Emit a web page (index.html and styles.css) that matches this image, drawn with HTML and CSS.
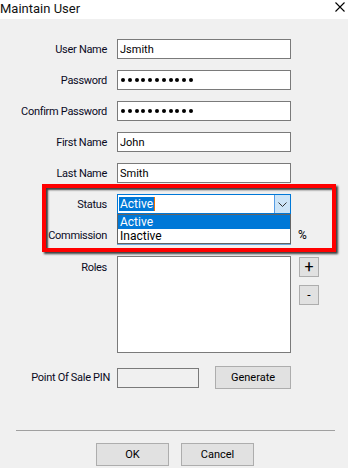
FILE: index.html
```html
<!DOCTYPE html>
<html lang="en">
<head>
    <meta charset="UTF-8">
    <meta name="viewport" content="width=device-width, initial-scale=1.0">
    <title>Maintain User</title>
    <link rel="stylesheet" href="styles.css">
</head>
<body>
    <div class="titlebar">
        <span class="title">Maintain User</span>
        <svg class="close" width="10" height="10" viewBox="0 0 10 10">
            <path d="M0.5 0.5 L9.5 9.5 M9.5 0.5 L0.5 9.5" stroke="#000" stroke-width="1.1" fill="none"/>
        </svg>
    </div>
    <div class="dialog">
        <div class="form">
            <label class="form-label">User Name</label>
            <input class="field" type="text" value="Jsmith">
            <span></span>

            <label class="form-label">Password</label>
            <div class="field dots"><span></span><span></span><span></span><span></span><span></span><span></span><span></span><span></span><span></span><span></span><span></span></div>
            <span></span>

            <label class="form-label">Confirm Password</label>
            <div class="field dots"><span></span><span></span><span></span><span></span><span></span><span></span><span></span><span></span><span></span><span></span><span></span></div>
            <span></span>

            <label class="form-label">First Name</label>
            <input class="field" type="text" value="John">
            <span></span>

            <label class="form-label">Last Name</label>
            <input class="field" type="text" value="Smith">
            <span></span>

            <label class="form-label">Status</label>
            <div class="combo">
                <span class="combo-text"><span class="selected">Active</span></span>
                <span class="combo-button">
                    <svg width="9" height="5" viewBox="0 0 9 5">
                        <path d="M0.5 0.5 L4.5 4.5 L8.5 0.5" stroke="#333" stroke-width="1" fill="none"/>
                    </svg>
                </span>
                <div class="combo-list">
                    <div class="combo-item active">Active</div>
                    <div class="combo-item">Inactive</div>
                </div>
            </div>
            <span></span>

            <label class="form-label">Commission</label>
            <input class="field commission" type="text" value="">
            <span class="unit">%</span>

            <label class="form-label top">Roles</label>
            <div class="listbox"></div>
            <div class="list-buttons">
                <button class="small-button plus">+</button>
                <button class="small-button">-</button>
            </div>

            <label class="form-label pin-label">Point Of Sale PIN</label>
            <div class="pin-row">
                <input class="field pin" type="text" value="" disabled>
                <button class="button">Generate</button>
            </div>
            <span></span>

            <div class="highlight"></div>
        </div>
        <div class="separator"></div>
        <div class="actions">
            <button class="button">OK</button>
            <button class="button">Cancel</button>
        </div>
    </div>
</body>
</html>
```

FILE: styles.css
```css
body {
    margin: 0;
    padding: 0;
    background-color: #f0f0f0;
    font-family: Roboto, 'Liberation Sans', sans-serif;
    font-size: 11px;
    color: #000;
}

.titlebar {
    height: 19px;
    background-color: #fff;
    display: flex;
    align-items: center;
    justify-content: space-between;
}

.title {
    font-size: 13px;
    color: #111;
    margin-top: -3px;
}

.close {
    margin-right: 3px;
    margin-top: -5px;
}

.dialog {
    padding-top: 20px;
}

.form {
    position: relative;
    display: grid;
    grid-template-columns: 97px 174px auto;
    column-gap: 10px;
    row-gap: 11px;
    padding-left: 10px;
    align-items: center;
}

.form-label {
    text-align: right;
    color: #0a0a1e;
    letter-spacing: -0.3px;
    white-space: nowrap;
}

.form-label.top {
    align-self: start;
    padding-top: 5px;
}

.field {
    box-sizing: border-box;
    width: 174px;
    height: 20px;
    margin: 0;
    padding: 0 2px;
    border: 1px solid #7a7a7a;
    background-color: #fff;
    font-family: Roboto, 'Liberation Sans', sans-serif;
    font-size: 11px;
    color: #000;
    outline: none;
}

.dots {
    display: flex;
    align-items: center;
    gap: 2.8px;
    padding-left: 3px;
}

.dots span {
    width: 4px;
    height: 4px;
    border-radius: 50%;
    background-color: #000;
}

.combo {
    position: relative;
    box-sizing: border-box;
    height: 20px;
    border: 1px solid #0078d7;
    background-color: #fff;
    display: flex;
    font-size: 12px;
}

.combo-text {
    flex: 1;
    display: flex;
    align-items: center;
    padding-left: 1px;
}

.selected {
    background-color: #0078d7;
    color: #fff;
    padding: 0 1px;
    line-height: 14px;
    border-right: 1px solid #f07000;
}

.combo-button {
    width: 15px;
    background-color: #cce4f7;
    border-left: 1px solid #569de5;
    display: flex;
    align-items: center;
    justify-content: center;
}

.combo-list {
    position: absolute;
    top: 19px;
    left: -1px;
    right: -1px;
    box-sizing: border-box;
    border: 1px solid #646464;
    background-color: #fff;
    z-index: 2;
}

.combo-item {
    height: 14px;
    line-height: 14px;
    padding-left: 2px;
}

.combo-item.active {
    background-color: #0078d7;
    color: #fff;
}

.commission {
    border-color: #6fa8dc;
}

.unit {
    margin-left: -3px;
    font-size: 12px;
}

.listbox {
    box-sizing: border-box;
    height: 97px;
    border: 1px solid #7a7a7a;
    background-color: #fff;
}

.list-buttons {
    align-self: start;
    display: flex;
    flex-direction: column;
    gap: 8px;
    margin-left: -2px;
    margin-top: 1px;
}

.small-button {
    box-sizing: border-box;
    width: 20px;
    height: 20px;
    padding: 0;
    border: 1px solid #adadad;
    background-color: #e1e1e1;
    font-family: Roboto, 'Liberation Sans', sans-serif;
    font-size: 12px;
    color: #000;
}

.small-button.plus {
    font-size: 16px;
    line-height: 16px;
}

.pin-label {
    margin-right: -3px;
    margin-top: 2px;
}

.pin-row {
    display: flex;
    justify-content: space-between;
    align-items: center;
    margin-top: 2px;
}

.pin {
    width: 82px;
    background-color: #f0f0f0;
    border-color: #7a7a7a;
}

.button {
    box-sizing: border-box;
    width: 76px;
    height: 23px;
    padding: 0;
    border: 1px solid #adadad;
    background-color: #e1e1e1;
    font-family: Roboto, 'Liberation Sans', sans-serif;
    font-size: 11px;
    color: #000;
}

.highlight {
    position: absolute;
    left: 42px;
    top: 145px;
    width: 294px;
    height: 68px;
    box-sizing: border-box;
    border: 4px solid #ff0000;
    box-shadow: 2px 2px 2px rgba(0, 0, 0, 0.75), inset 2px 2px 2px rgba(0, 0, 0, 0.75);
    z-index: 3;
}

.separator {
    height: 1px;
    background-color: #a0a0a0;
    margin: 41px 13px 0 16px;
}

.actions {
    display: flex;
    justify-content: center;
    gap: 12px;
    padding-top: 12px;
    padding-left: 2px;
}

.actions .button {
    width: 73px;
}
```
